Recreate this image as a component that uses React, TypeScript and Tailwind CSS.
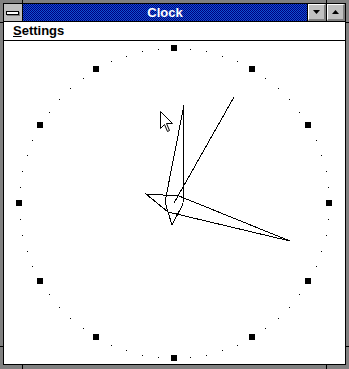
import React from "react";

const CX = 174;
const CY = 203;
const R = 155;

const font = { fontFamily: '"Liberation Sans", Arial, sans-serif' };

// dial: hour squares and minute dots, in page coordinates
const Dial = () => {
  const marks = [];
  for (let i = 0; i < 60; i++) {
    const a = (i * 6 * Math.PI) / 180;
    const x = Math.round(CX + R * Math.sin(a));
    const y = Math.round(CY - R * Math.cos(a));
    if (i % 5 === 0) {
      marks.push(<rect key={i} x={x - 3} y={y - 3} width={6} height={6} fill="#000" />);
    } else {
      marks.push(<rect key={i} x={x} y={y} width={1} height={1} fill="#000" />);
    }
  }
  return <>{marks}</>;
};

const Tick = ({ className }: { className: string }) => (
  <div className={`absolute bg-black ${className}`} />
);

const App = () => {
  return (
    <div
      className="relative w-[349px] h-[369px] bg-[#808080] pt-[3px] pl-[3px] pr-[3px] pb-[4px] select-none"
      style={font}
    >
      {/* sizing corner marks */}
      <Tick className="left-[22px] top-0 w-px h-[3px]" />
      <Tick className="left-[326px] top-0 w-px h-[3px]" />
      <Tick className="left-[22px] bottom-0 w-px h-[4px]" />
      <Tick className="left-[326px] bottom-0 w-px h-[4px]" />
      <Tick className="left-0 top-[22px] w-[3px] h-px" />
      <Tick className="left-0 top-[346px] w-[3px] h-px" />
      <Tick className="right-0 top-[22px] w-[3px] h-px" />
      <Tick className="right-0 top-[346px] w-[3px] h-px" />

      <div className="flex flex-col h-full border border-black bg-white">
        {/* title bar */}
        <div className="flex h-[18px] border-b border-black">
          <div className="w-[19px] border-r border-black bg-[#c0c0c0] flex items-center justify-center">
            <div className="w-[13px] h-[4px] border border-black bg-white shadow-[1px_1px_0_#808080] mr-[1px]" />
          </div>
          <div className="flex-1 bg-[repeating-conic-gradient(#000080_0_25%,#1050d0_0_50%)] bg-size-[2px_2px] text-white text-[13px] font-bold leading-[17px] text-center">
            Clock
          </div>
          <div className="w-[19px] border-l border-black bg-[#c0c0c0] flex">
            <div className="flex-1 border-t border-l border-white border-b-2 border-r-2 border-b-[#808080] border-r-[#808080] flex items-center justify-center">
              <svg width="7" height="4" viewBox="0 0 7 4">
                <polygon points="0,0 7,0 3.5,4" fill="#000" />
              </svg>
            </div>
          </div>
          <div className="w-[19px] border-l border-black bg-[#c0c0c0] flex">
            <div className="flex-1 border-t border-l border-white border-b-2 border-r-2 border-b-[#808080] border-r-[#808080] flex items-center justify-center">
              <svg width="7" height="4" viewBox="0 0 7 4">
                <polygon points="3.5,0 7,4 0,4" fill="#000" />
              </svg>
            </div>
          </div>
        </div>

        {/* menu bar */}
        <div className="h-[19px] border-b border-black flex items-start">
          <span className="ml-[9px] text-[13px] font-bold leading-[18px] text-black">
            <span className="underline underline-offset-1">S</span>ettings
          </span>
        </div>

        {/* clock face */}
        <div className="flex-1 relative">
          <svg
            className="block w-full h-full"
            viewBox="4 41 341 323"
            shapeRendering="crispEdges"
          >
            <Dial />
            {/* minute hand */}
            <polygon
              points="184,105 183,204 172,225 165,202"
              fill="none"
              stroke="#000"
              strokeWidth={1}
            />
            {/* hour hand */}
            <polygon
              points="290,241 168,212 146,194 179,196"
              fill="none"
              stroke="#000"
              strokeWidth={1}
            />
            {/* second hand */}
            <line x1={174} y1={203} x2={234} y2={97} stroke="#000" strokeWidth={1} />
            {/* mouse pointer */}
            <path
              d="M160.5 111.5 V128.5 L164.5 124.5 L167.5 131.5 L169.5 130.5 L166.5 123.5 H172.5 Z"
              fill="#fff"
              stroke="#000"
              strokeWidth={1}
              shapeRendering="auto"
            />
          </svg>
        </div>
      </div>
    </div>
  );
};

export default App;
